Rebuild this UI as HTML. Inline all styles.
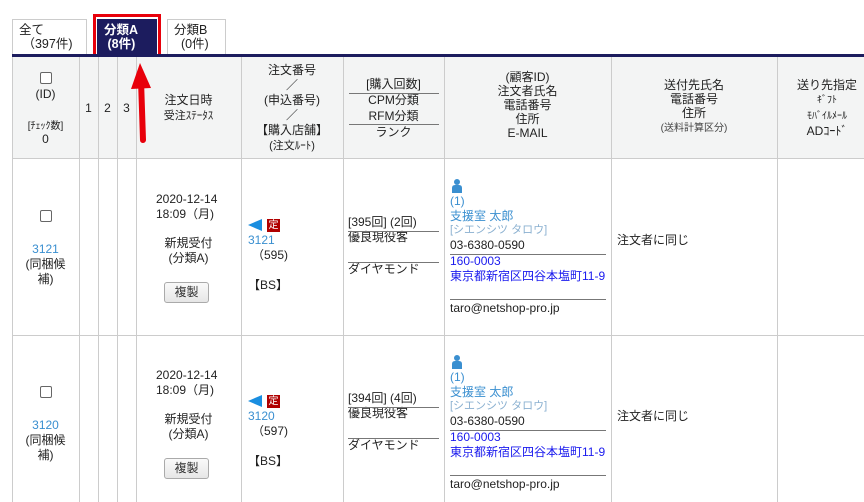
<!DOCTYPE html>
<html><head><meta charset="utf-8"><style>
*{margin:0;padding:0;box-sizing:border-box}
body{width:864px;height:502px;overflow:hidden;background:#fff;font-family:"Liberation Sans","Noto Sans CJK JP",sans-serif;font-size:12px;color:#222;position:relative}
.a{position:absolute;white-space:nowrap;line-height:15px}
.c{text-align:center}
.tab{position:absolute;top:19px;height:36px;border:1px solid #ccc;border-bottom:none;background:#fff;line-height:14px;padding:3px 0 0 6px;font-size:12.5px}
.vl{position:absolute;width:1px;background:#ccc}
.hl{position:absolute;height:1px;background:#ccc}
.blue{color:#3a8fd0}
.lk{color:#1a1aee}
.ln{position:absolute;height:1px;background:#777}
.cb{position:absolute;width:12px;height:12px;border:1px solid #666;border-radius:2px;background:#fff}
.btn{position:absolute;width:45px;height:21px;border:1px solid #aaa;border-radius:3px;background:linear-gradient(#fafafa,#e6e6e6);text-align:center;line-height:19px;color:#333}
.small{font-size:10px;color:#444}
</style></head><body>
<div class="tab" style="left:12px;width:75px">全て<br>&nbsp;（397件)</div>
<div class="tab" style="left:97px;width:60px;background:#1c1c5e;color:#fff;font-weight:bold;border-color:#1c1c5e">分類A<br>&nbsp;(8件)</div>
<div style="position:absolute;left:93px;top:14px;width:68px;height:45px;border:3px solid #e8000b"></div>
<div class="tab" style="left:167px;width:59px">分類B<br>&nbsp;&nbsp;(0件)</div>
<div style="position:absolute;left:12px;top:54px;width:852px;height:3px;background:#1c1c5e"></div>
<div style="position:absolute;left:12px;top:57px;width:852px;height:101px;background:#f3f4f4"></div>
<div class="vl" style="left:12px;top:57px;height:445px"></div>
<div class="vl" style="left:79px;top:57px;height:445px"></div>
<div class="vl" style="left:98px;top:57px;height:445px"></div>
<div class="vl" style="left:117px;top:57px;height:445px"></div>
<div class="vl" style="left:136px;top:57px;height:445px"></div>
<div class="vl" style="left:241px;top:57px;height:445px"></div>
<div class="vl" style="left:343px;top:57px;height:445px"></div>
<div class="vl" style="left:444px;top:57px;height:445px"></div>
<div class="vl" style="left:611px;top:57px;height:445px"></div>
<div class="vl" style="left:777px;top:57px;height:445px"></div>
<div class="hl" style="left:12px;top:158px;width:852px"></div>
<div class="hl" style="left:12px;top:335px;width:852px"></div>
<!-- header -->
<div class="cb" style="left:40px;top:72px"></div>
<div class="a c" style="left:12px;width:67px;top:87px">(ID)</div>
<div class="a c" style="left:12px;width:67px;top:119px;font-size:10px">[ﾁｪｯｸ数]</div>
<div class="a c" style="left:12px;width:67px;top:132px">0</div>
<div class="a c" style="left:79px;width:19px;top:101px">1</div>
<div class="a c" style="left:98px;width:19px;top:101px">2</div>
<div class="a c" style="left:117px;width:19px;top:101px">3</div>
<div class="a c" style="left:136px;width:105px;top:93px">注文日時<br><span style="font-size:11px">受注ｽﾃｰﾀｽ</span></div>
<div class="a c" style="left:241px;width:102px;top:63px">注文番号<br>／<br>(申込番号)<br>／<br>【購入店舗】<br><span style="font-size:11px">(注文ﾙｰﾄ)</span></div>
<div class="a c" style="left:343px;width:101px;top:76px;line-height:16px">[購入回数]<br>CPM分類<br>RFM分類<br>ランク</div>
<div class="ln" style="left:349px;top:93px;width:90px"></div>
<div class="ln" style="left:349px;top:124px;width:90px"></div>
<div class="a c" style="left:444px;width:167px;top:70px;line-height:14px">(顧客ID)<br>注文者氏名<br>電話番号<br>住所<br>E-MAIL</div>
<div class="a c" style="left:611px;width:166px;top:78px;line-height:14px">送付先氏名<br>電話番号<br>住所<br><span class="small">(送料計算区分)</span></div>
<div class="a c" style="left:777px;width:100px;top:78px;line-height:14px">送り先指定<br><span style="font-size:10px">ｷﾞﾌﾄ<br>ﾓﾊﾞｲﾙﾒｰﾙ</span><br>ADｺｰﾄﾞ</div>
<!-- arrow -->
<svg style="position:absolute;left:128px;top:58px" width="32" height="86"><path d="M15 82 L13 22" stroke="#e8000b" stroke-width="6" stroke-linecap="round"/><path d="M12 5 L3 31 L23 30 Z" fill="#e8000b"/></svg>
<div style="position:absolute;left:0;top:0">
<div class="cb" style="left:40px;top:210px"></div>
<div class="a c blue" style="left:12px;width:67px;top:242px">3121</div>
<div class="a c" style="left:12px;width:67px;top:257px">(同梱候<br>補)</div>
<div class="a" style="left:156px;top:192px">2020-12-14<br>18:09（月)</div>
<div class="a c" style="left:136px;width:105px;top:236px">新規受付<br>(分類A)</div>
<div class="btn" style="left:164px;top:282px">複製</div>
<svg style="position:absolute;left:248px;top:219px" width="16" height="12"><path d="M0 6 L14 0 L14 12 Z" fill="#1a8ee0"/></svg>
<div style="position:absolute;left:267px;top:219px;width:13px;height:13px;background:#b00000;color:#fff;font-size:10px;line-height:13px;text-align:center">定</div>
<div class="a blue" style="left:248px;top:233px">3121</div>
<div class="a" style="left:252px;top:248px">（595)</div>
<div class="a" style="left:248px;top:278px">【BS】</div>
<div class="a" style="left:348px;top:215px">[395回] (2回)<br>優良現役客</div>
<div class="ln" style="left:348px;top:231px;width:91px"></div>
<div class="ln" style="left:348px;top:262px;width:91px"></div>
<div class="a" style="left:348px;top:262px">ダイヤモンド</div>
<svg style="position:absolute;left:452px;top:179px" width="10" height="14"><circle cx="5" cy="3" r="3" fill="#3a8fd0"/><path d="M0 14 L0 9 Q0 6 3 6 L7 6 Q10 6 10 9 L10 14 Z" fill="#3a8fd0"/></svg>
<div class="a blue" style="left:450px;top:194px">(1)<br>支援室 太郎</div>
<div class="a" style="left:450px;top:223px;font-size:11px;color:#8ab0d0">[シエンシツ タロウ]</div>
<div class="a" style="left:450px;top:238px">03-6380-0590</div>
<div class="ln" style="left:450px;top:254px;width:156px"></div>
<div class="a lk" style="left:450px;top:254px">160-0003<br>東京都新宿区四谷本塩町11-9</div>
<div class="ln" style="left:450px;top:299px;width:156px"></div>
<div class="a" style="left:450px;top:301px">taro@netshop-pro.jp</div>
<div class="a" style="left:617px;top:233px">注文者に同じ</div>
</div>
<div style="position:absolute;left:0;top:176px">
<div class="cb" style="left:40px;top:210px"></div>
<div class="a c blue" style="left:12px;width:67px;top:242px">3120</div>
<div class="a c" style="left:12px;width:67px;top:257px">(同梱候<br>補)</div>
<div class="a" style="left:156px;top:192px">2020-12-14<br>18:09（月)</div>
<div class="a c" style="left:136px;width:105px;top:236px">新規受付<br>(分類A)</div>
<div class="btn" style="left:164px;top:282px">複製</div>
<svg style="position:absolute;left:248px;top:219px" width="16" height="12"><path d="M0 6 L14 0 L14 12 Z" fill="#1a8ee0"/></svg>
<div style="position:absolute;left:267px;top:219px;width:13px;height:13px;background:#b00000;color:#fff;font-size:10px;line-height:13px;text-align:center">定</div>
<div class="a blue" style="left:248px;top:233px">3120</div>
<div class="a" style="left:252px;top:248px">（597)</div>
<div class="a" style="left:248px;top:278px">【BS】</div>
<div class="a" style="left:348px;top:215px">[394回] (4回)<br>優良現役客</div>
<div class="ln" style="left:348px;top:231px;width:91px"></div>
<div class="ln" style="left:348px;top:262px;width:91px"></div>
<div class="a" style="left:348px;top:262px">ダイヤモンド</div>
<svg style="position:absolute;left:452px;top:179px" width="10" height="14"><circle cx="5" cy="3" r="3" fill="#3a8fd0"/><path d="M0 14 L0 9 Q0 6 3 6 L7 6 Q10 6 10 9 L10 14 Z" fill="#3a8fd0"/></svg>
<div class="a blue" style="left:450px;top:194px">(1)<br>支援室 太郎</div>
<div class="a" style="left:450px;top:223px;font-size:11px;color:#8ab0d0">[シエンシツ タロウ]</div>
<div class="a" style="left:450px;top:238px">03-6380-0590</div>
<div class="ln" style="left:450px;top:254px;width:156px"></div>
<div class="a lk" style="left:450px;top:254px">160-0003<br>東京都新宿区四谷本塩町11-9</div>
<div class="ln" style="left:450px;top:299px;width:156px"></div>
<div class="a" style="left:450px;top:301px">taro@netshop-pro.jp</div>
<div class="a" style="left:617px;top:233px">注文者に同じ</div>
</div>
</body></html>
